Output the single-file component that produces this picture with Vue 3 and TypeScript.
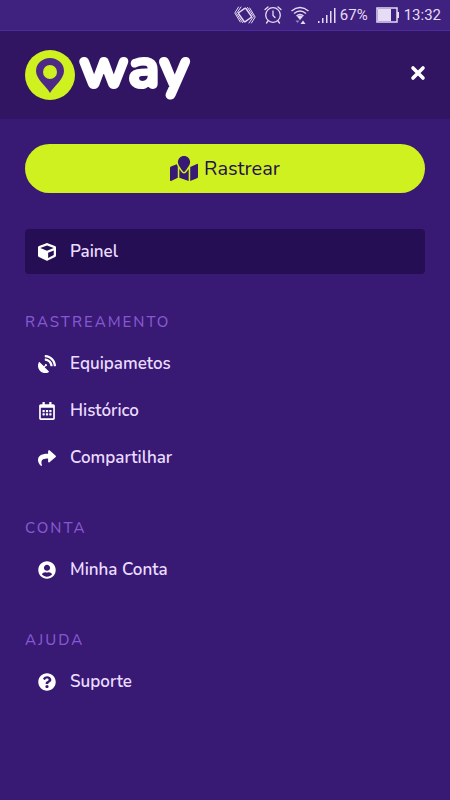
<script setup lang="ts">
interface MenuItem {
  label: string
  viewBox: string
  path: string
  active?: boolean
}

interface MenuSection {
  title?: string
  items: MenuItem[]
}

const sections: MenuSection[] = [
  {
    items: [
      {
        label: 'Painel',
        active: true,
        viewBox: '0 0 512 512',
        path: 'M239.1 6.3l-208 78c-18.7 7-31.1 25-31.1 45v225.1c0 18.2 10.3 34.8 26.5 42.9l208 104c13.5 6.8 29.4 6.8 42.9 0l208-104c16.3-8.1 26.5-24.8 26.5-42.9V129.3c0-20-12.4-37.9-31.1-44.9l-208-78C262 2.2 250 2.2 239.1 6.3zM256 68.4l192 72v1.1l-192 78-192-78v-1.1l192-72zm32 356V275.5l160-65v133.9l-160 80z',
      },
    ],
  },
  {
    title: 'Rastreamento',
    items: [
      {
        label: 'Equipametos',
        viewBox: '0 0 512 512',
        path: 'M305.45 462.59c7.39 7.3 6.19 20.1-3 25-77.71 41.8-176.73 29.91-242.34-35.71C-5.5 386.28-17.4 287.36 24.41 209.55c4.89-9.09 17.69-10.3 25-3L166.23 323.37l27.39-27.39c-.69-2.61-1.59-5-1.59-7.82a32 32 0 1 1 32 32c-2.8 0-5.2-.89-7.8-1.59l-27.41 27.41zM511.98 303.07a16.1 16.1 0 0 1-16 17h-32.12a15.97 15.97 0 0 1-15.89-15C440.47 175.55 336.45 70.53 207.03 63.53a15.84 15.84 0 0 1-15-15.9v-31.6A16.09 16.09 0 0 1 209.03.02C372.25 8.62 503.47 139.84 511.98 303.07zm-96.02-.3a16.21 16.21 0 0 1-16.11 17.3h-32.2a16.07 16.07 0 0 1-15.9-14.7c-6.9-77.02-68.11-138.92-144.92-145.23a15.94 15.94 0 0 1-14.8-15.9v-32.1a16.13 16.13 0 0 1 17.3-16.1c110.12 8.5 198.23 96.6 206.63 206.73z',
      },
      {
        label: 'Histórico',
        viewBox: '0 0 448 512',
        path: 'M148 288h-40c-6.6 0-12-5.4-12-12v-40c0-6.6 5.4-12 12-12h40c6.6 0 12 5.4 12 12v40c0 6.6-5.4 12-12 12zm108-12v-40c0-6.6-5.4-12-12-12h-40c-6.6 0-12 5.4-12 12v40c0 6.6 5.4 12 12 12h40c6.6 0 12-5.4 12-12zm96 0v-40c0-6.6-5.4-12-12-12h-40c-6.6 0-12 5.4-12 12v40c0 6.6 5.4 12 12 12h40c6.6 0 12-5.4 12-12zm-96 96v-40c0-6.6-5.4-12-12-12h-40c-6.6 0-12 5.4-12 12v40c0 6.6 5.4 12 12 12h40c6.6 0 12-5.4 12-12zm-96 0v-40c0-6.6-5.4-12-12-12h-40c-6.6 0-12 5.4-12 12v40c0 6.6 5.4 12 12 12h40c6.6 0 12-5.4 12-12zm192 0v-40c0-6.6-5.4-12-12-12h-40c-6.6 0-12 5.4-12 12v40c0 6.6 5.4 12 12 12h40c6.6 0 12-5.4 12-12zm96-260v352c0 26.5-21.5 48-48 48H48c-26.5 0-48-21.5-48-48V112c0-26.5 21.5-48 48-48h48V12c0-6.6 5.4-12 12-12h40c6.6 0 12 5.4 12 12v52h128V12c0-6.6 5.4-12 12-12h40c6.6 0 12 5.4 12 12v52h48c26.5 0 48 21.5 48 48zm-48 346V160H48v298c0 3.3 2.7 6 6 6h340c3.3 0 6-2.7 6-6z',
      },
      {
        label: 'Compartilhar',
        viewBox: '0 0 512 512',
        path: 'M503.691 189.836L327.687 37.851C312.281 24.546 288 35.347 288 56.015v80.053C127.371 137.907 0 170.1 0 322.326c0 61.441 39.581 122.309 83.333 154.132 13.653 9.931 33.111-2.533 28.077-18.631C66.066 312.814 132.917 274.316 288 272.085V360c0 20.7 24.3 31.453 39.687 18.164l176.004-152c11.071-9.562 11.086-26.753 0-36.328z',
      },
    ],
  },
  {
    title: 'Conta',
    items: [
      {
        label: 'Minha Conta',
        viewBox: '0 0 496 512',
        path: 'M248 8C111 8 0 119 0 256s111 248 248 248 248-111 248-248S385 8 248 8zm0 96c48.6 0 88 39.4 88 88s-39.4 88-88 88-88-39.4-88-88 39.4-88 88-88zm0 344c-58.7 0-111.3-26.6-146.5-68.2 18.8-35.4 55.6-59.8 98.5-59.8 2.4 0 4.8.4 7.1 1.1 13 4.2 26.6 6.9 40.9 6.9 14.3 0 28-2.7 40.9-6.9 2.3-.7 4.7-1.1 7.1-1.1 42.9 0 79.7 24.4 98.5 59.8C359.3 421.4 306.7 448 248 448z',
      },
    ],
  },
  {
    title: 'Ajuda',
    items: [
      {
        label: 'Suporte',
        viewBox: '0 0 512 512',
        path: 'M504 256c0 136.997-111.043 248-248 248S8 392.997 8 256C8 119.083 119.043 8 256 8s248 111.083 248 248zM262.655 90c-54.497 0-89.255 22.957-116.549 63.758-3.536 5.286-2.353 12.415 2.715 16.258l34.699 26.31c5.205 3.947 12.621 3.008 16.665-2.122 17.864-22.658 30.113-35.797 57.303-35.797 20.429 0 45.698 13.148 45.698 32.958 0 14.976-12.363 22.667-32.534 33.976C247.128 238.528 216 254.941 216 296v4c0 6.627 5.373 12 12 12h56c6.627 0 12-5.373 12-12v-1.333c0-28.462 83.186-29.647 83.186-106.667 0-58.002-60.165-102-116.531-102zM256 338c-25.365 0-46 20.635-46 46 0 25.364 20.635 46 46 46s46-20.636 46-46c0-25.365-20.635-46-46-46z',
      },
    ],
  },
]
</script>

<template>
  <div class="screen">
    <div class="status">
      <svg class="vibrate" width="22" height="20" viewBox="0 0 22 20" aria-hidden="true">
        <g fill="none" stroke="currentColor" stroke-linejoin="round" stroke-linecap="round">
          <rect x="6.500" y="4.500" width="9" height="11" rx="1" transform="rotate(-35 11 10)" stroke-width="1.500" />
          <path d="M7 2L2.500 8.500l6 9M4.500 2L.800 8l5.500 9" />
          <path d="M15 18l4.500-6.500-6-9M17.500 18l3.700-6L15.700 3" />
        </g>
      </svg>
      <svg class="alarm" width="18" height="20" viewBox="0 0 18 20" aria-hidden="true">
        <g fill="none" stroke="currentColor" stroke-width="1.300" stroke-linecap="round">
          <circle cx="9" cy="10" r="7.300" />
          <path d="M9 6v4.500l2 2M1 4.500L4 2M17 4.500L14 2M4 16l-1.500 2M14 16l1.500 2" />
        </g>
      </svg>
      <svg class="wifi" width="20" height="20" viewBox="0 0 20 20" aria-hidden="true">
        <g fill="none" stroke="currentColor" stroke-width="1.400">
          <path d="M1.500 6Q10-1 18.500 6M4 8.500q6-5 12 0M6.500 11q3.500-3 7 0" />
        </g>
        <path d="M7 11.500q3-2 6 0L10 15z" fill="currentColor" />
        <path d="M5.500 15.500h4L7.500 18z" fill="currentColor" opacity=".55" />
        <path d="M10.500 19h5L13 15.500z" fill="currentColor" />
      </svg>
      <svg class="signal" width="18" height="16" viewBox="0 0 18 16" aria-hidden="true">
        <path d="M0 14h1.500v2H0zM4 11h1.500v5H4zM8 8h1.500v8H8zM12 4h1.500v12H12zM16 1h1.500v15H16z" fill="currentColor" />
      </svg>
      <span class="percent">67%</span>
      <svg class="battery" width="24" height="16" viewBox="0 0 24 16" aria-hidden="true">
        <path d="M1 1h20v14H1z" fill="none" stroke="currentColor" stroke-width="1.500" />
        <path d="M2 2h13v12H2zM21 5h2v6h-2z" fill="currentColor" />
      </svg>
      <span>13:32</span>
    </div>

    <header class="header">
      <svg class="logo" width="168" height="52" viewBox="0 0 168 52" role="img" aria-label="Oway">
        <circle cx="25" cy="26" r="25" fill="#cff11f" />
        <path d="M25 44C21 37 11 30 11 22a14 13 0 0 1 28 0c0 8-10 15-14 22z" fill="#4c2a86" />
        <circle cx="25" cy="23" r="7" fill="#cff11f" />
        <text class="wordmark" x="54" y="38">way</text>
      </svg>
      <button class="close" type="button" aria-label="Fechar">
        <svg width="16" height="16" viewBox="0 0 16 16" aria-hidden="true">
          <path d="M3 3l10 10M13 3L3 13" stroke="currentColor" stroke-width="3.600" stroke-linecap="round" />
        </svg>
      </button>
    </header>

    <main class="content">
      <button class="track" type="button">
        <svg width="28" height="25" viewBox="0 0 576 512" aria-hidden="true">
          <path fill="currentColor" d="M288 0c-69.590 0-126 56.410-126 126 0 56.260 82.350 158.800 113.900 196.020 6.390 7.540 17.820 7.540 24.200 0C331.650 284.800 414 182.260 414 126 414 56.410 357.590 0 288 0zM20.120 215.950A32.006 32.006 0 0 0 0 245.660v250.320c0 11.320 11.430 19.060 21.940 14.860L160 448V214.920c-8.840-15.980-16.070-31.540-21.250-46.420L20.120 215.950zM288 359.670c-14.070 0-27.380-6.180-36.510-16.960-19.660-23.200-40.570-49.620-59.490-76.720v182l192 64V266c-18.920 27.090-39.820 53.520-59.490 76.720-9.130 10.770-22.440 16.950-36.510 16.950zm266.060-198.510L416 224v288l139.880-55.950A31.996 31.996 0 0 0 576 426.340V176.020c0-11.320-11.430-19.060-21.940-14.860z" />
        </svg>
        <span>Rastrear</span>
      </button>

      <nav class="menu">
        <section v-for="section in sections" :key="section.items[0].label" class="section">
          <h2 v-if="section.title" class="title">{{ section.title }}</h2>
          <ul class="items">
            <li v-for="item in section.items" :key="item.label">
              <a href="#" class="item" :class="{ active: item.active }">
                <svg width="18" height="18" :viewBox="item.viewBox" aria-hidden="true">
                  <path :d="item.path" fill="currentColor" />
                </svg>
                <span>{{ item.label }}</span>
              </a>
            </li>
          </ul>
        </section>
      </nav>
    </main>
  </div>
</template>

<style>
body {
  margin: 0;
  background: #381973;
}
</style>

<style scoped>
.screen {
  min-height: 100vh;
  background: #381973;
  color: #fff;
  font-family: Nunito, Lato, "Noto Sans", sans-serif;
}

.status {
  display: flex;
  align-items: center;
  justify-content: flex-end;
  box-sizing: border-box;
  height: 31px;
  padding-right: 9px;
  background: #3f2180;
  border-bottom: 1px solid #4c2c9c;
  color: #e6dcf5;
  font: 15px/20px Roboto, sans-serif;
}

.alarm,
.wifi,
.signal {
  margin-left: 8px;
}

.percent {
  margin-left: 4px;
}

.battery {
  margin: 0 4px 0 8px;
}

.header {
  display: flex;
  align-items: center;
  justify-content: space-between;
  box-sizing: border-box;
  height: 88px;
  padding: 0 24px 0 25px;
  background: #311563;
}

.logo {
  overflow: visible;
}

.wordmark {
  fill: #fff;
  stroke: #fff;
  stroke-width: 3px;
  stroke-linejoin: round;
  font: 700 58px Nunito, Lato, sans-serif;
}

.close {
  display: flex;
  padding: 0 0 4px;
  border: 0;
  background: none;
  color: #fff;
}

.content {
  padding: 25px;
}

.track {
  display: flex;
  align-items: center;
  justify-content: center;
  gap: 6px;
  width: 100%;
  height: 49px;
  padding: 0;
  border: 0;
  border-radius: 25px;
  background: #cff11f;
  color: #381973;
  font: 20px/28px Nunito, Lato, sans-serif;
}

.track span {
  color: #24104c;
}

.menu {
  display: flex;
  flex-direction: column;
  gap: 37px;
  margin-top: 36px;
}

.title {
  margin: 0 0 8px;
  color: #8558d0;
  font-size: 15px;
  font-weight: 500;
  line-height: 22px;
  letter-spacing: 2px;
  text-transform: uppercase;
}

.items {
  display: flex;
  flex-direction: column;
  gap: 2px;
  margin: 0;
  padding: 0;
  list-style: none;
}

.item {
  display: flex;
  align-items: center;
  gap: 14px;
  height: 45px;
  padding: 0 13px;
  border-radius: 4px;
  color: #fff;
  font-size: 17px;
  font-weight: 600;
  line-height: 24px;
  text-decoration: none;
}

.item span {
  color: #eadcff;
}

.active {
  background: #260e54;
}
</style>
